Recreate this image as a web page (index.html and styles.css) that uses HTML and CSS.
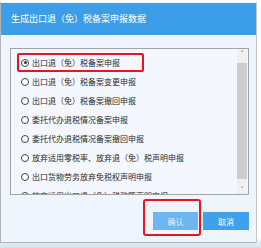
FILE: index.html
```html
<!DOCTYPE html>
<html lang="zh-CN">
<head>
  <meta charset="UTF-8">
  <title>生成出口退（免）税备案申报数据</title>
  <link rel="stylesheet" href="styles.css">
</head>
<body>
  <div class="dialog">
    <div class="title">生成出口退（免）税备案申报数据</div>
    <div class="content">
      <div class="listbox">
        <div class="options">
          <label class="option marked"><span class="radio checked"></span>出口退（免）税备案申报</label>
          <label class="option"><span class="radio"></span>出口退（免）税备案变更申报</label>
          <label class="option"><span class="radio"></span>出口退（免）税备案撤回申报</label>
          <label class="option"><span class="radio"></span>委托代办退税情况备案申报</label>
          <label class="option"><span class="radio"></span>委托代办退税情况备案撤回申报</label>
          <label class="option"><span class="radio"></span>放弃适用零税率、放弃退（免）税声明申报</label>
          <label class="option"><span class="radio"></span>出口货物劳务放弃免税权声明申报</label>
          <label class="option"><span class="radio"></span>放弃适用出口退（免）税政策声明申报</label>
        </div>
        <div class="scrollbar">
          <div class="arrow">&#x2C4;</div>
          <div class="thumb"></div>
          <div class="arrow">&#x2C5;</div>
        </div>
      </div>
      <div class="actions">
        <button class="btn confirm">确认<span class="mark"></span></button>
        <button class="btn cancel">取消</button>
      </div>
    </div>
  </div>
</body>
</html>
```

FILE: styles.css
```css
body {
  margin: 0;
  padding: 2px 0 0 0;
  height: 246px;
  overflow: hidden;
  font-family: "Noto Sans CJK SC", "Noto Sans", sans-serif;
  background: linear-gradient(to bottom, #ffffff 0, #ffffff 236px, #cfe2f1 248px);
}
.dialog {
  width: 255px;
  height: 240px;
  border-left: 1px solid #b4b4b4;
  border-right: 1px solid #c8c8c8;
  border-bottom: 1px solid #b4b4b4;
  background: #eef5fd;
  display: flex;
  flex-direction: column;
}
.title {
  height: 32px;
  margin-top: 1px;
  line-height: 32px;
  padding-left: 10px;
  background: #3c9ee9;
  color: #ffffff;
  font-size: 9px;
}
.content {
  padding: 13px 7px 0 9px;
}
.listbox {
  height: 145px;
  border: 1px solid #a3a3a3;
  background: #f4f8fe;
  display: flex;
  overflow: hidden;
}
.options {
  flex: 1;
  padding: 4px 0 0 6px;
  display: flex;
  flex-direction: column;
}
.option {
  height: 19px;
  flex: none;
  display: flex;
  align-items: center;
  padding-left: 4px;
  font-size: 8px;
  color: #2a2a2a;
  white-space: nowrap;
  box-sizing: border-box;
}
.option.marked {
  width: 127px;
  border: 2px solid #e8141e;
  border-radius: 2px;
  padding-left: 2px;
}
.radio {
  width: 6px;
  height: 6px;
  border: 1px solid #444444;
  border-radius: 50%;
  margin-right: 3px;
  flex: none;
  display: flex;
  align-items: center;
  justify-content: center;
  background: #ffffff;
}
.radio.checked::after {
  content: "";
  width: 3px;
  height: 3px;
  border-radius: 50%;
  background: #333333;
}
.scrollbar {
  width: 10px;
  margin-right: 1px;
  display: flex;
  flex-direction: column;
  background: #f0f0f0;
}
.arrow {
  height: 9px;
  font-size: 7px;
  line-height: 10px;
  text-align: center;
  color: #606060;
  font-family: "DejaVu Sans", sans-serif;
}
.thumb {
  flex: 1;
  margin: 5px 0 6px;
  background: #cdcdcd;
}
.actions {
  display: flex;
  justify-content: flex-end;
  gap: 5px;
  margin-top: 17px;
}
.btn {
  position: relative;
  height: 18px;
  padding: 0;
  border: none;
  font-family: "Noto Sans CJK SC", sans-serif;
  font-size: 8px;
  color: #ffffff;
}
.confirm {
  width: 45px;
  background: #6db6f1;
  color: #e4f2ff;
}
.cancel {
  width: 46px;
  background: #3fa0ec;
}
.mark {
  position: absolute;
  left: -10px;
  top: -13px;
  right: -3px;
  bottom: -6px;
  border: 2px solid #e8141e;
  border-radius: 3px;
}
```
